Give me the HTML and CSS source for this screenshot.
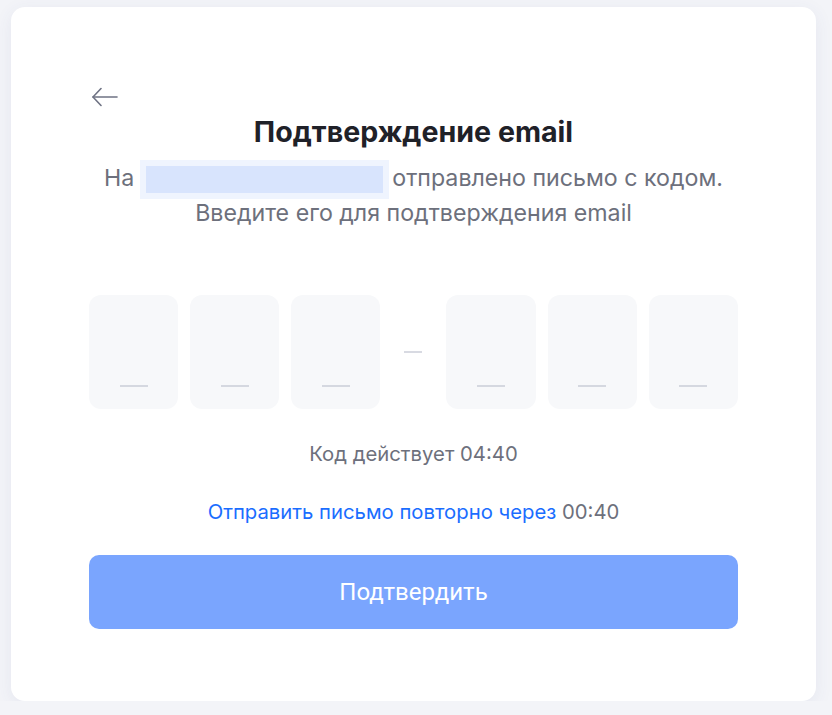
FILE: index.html
```html
<!DOCTYPE html>
<html lang="ru">
<head>
    <meta charset="UTF-8">
    <title>Подтверждение email</title>
    <link rel="stylesheet" href="styles.css">
</head>
<body>

<div class="card">
    <button class="back" aria-label="Назад">
        <svg width="26" height="24" viewBox="0 0 26 24" fill="none" stroke="#6f7384" stroke-width="1.6" stroke-linecap="round" stroke-linejoin="round">
            <path d="M25 12H1"/>
            <path d="M9 3.5L1 12l8 8.5"/>
        </svg>
    </button>

    <h1 class="title">Подтверждение email</h1>

    <p class="subtitle">
        На<span class="email-blur"></span>отправлено письмо с кодом.<br>
        Введите его для подтверждения email
    </p>

    <div class="code">
        <div class="cell"><span></span></div>
        <div class="cell"><span></span></div>
        <div class="cell"><span></span></div>
        <div class="dash"><span></span></div>
        <div class="cell"><span></span></div>
        <div class="cell"><span></span></div>
        <div class="cell"><span></span></div>
    </div>

    <p class="timer">Код действует 04:40</p>

    <p class="resend"><a href="#">Отправить письмо повторно через</a> 00:40</p>

    <button class="submit">Подтвердить</button>
</div>

</body>
</html>
```

FILE: styles.css
```css
body {
    margin: 0;
    background: #f3f4f8;
    font-family: Inter, "Noto Sans", sans-serif;
    color: #1f2128;
}

.card {
    box-sizing: border-box;
    width: 805px;
    height: 694px;
    margin: 7px 0 0 11px;
    padding: 0 78px;
    background: #ffffff;
    border-radius: 14px;
    box-shadow: 0 4px 18px rgba(60, 80, 140, 0.08);
    text-align: center;
    overflow: hidden;
}

.back {
    display: block;
    margin: 78px 0 0 3px;
    padding: 0;
    border: none;
    background: none;
    height: 24px;
    cursor: pointer;
}

.title {
    margin: 7px 0 0;
    font-size: 28.6px;
    line-height: 32px;
    font-weight: 700;
    color: #1f2128;
}

.subtitle {
    margin: 13px 0 0;
    font-size: 23.2px;
    line-height: 35px;
    color: #6d707c;
}

.email-blur {
    display: inline-block;
    width: 237px;
    height: 27px;
    margin: 0 9px 0 12px;
    vertical-align: -7px;
    background: #d8e4fd;
    box-shadow: 0 0 0 6px #eff4fe;
}

.code {
    display: grid;
    grid-template-columns: repeat(3, 1fr) 42px repeat(3, 1fr);
    column-gap: 12px;
    margin-top: 64px;
    height: 114px;
}

.cell {
    background: #f7f8fa;
    border-radius: 12px;
    display: flex;
    align-items: flex-end;
    justify-content: center;
    padding-bottom: 22px;
    box-sizing: border-box;
}

.cell span {
    width: 28px;
    height: 2px;
    background: #d5d8e0;
}

.dash {
    display: flex;
    align-items: center;
    justify-content: center;
}

.dash span {
    width: 18px;
    height: 2px;
    background: #d8dae2;
}

.timer {
    margin: 33px 0 0;
    font-size: 20.3px;
    line-height: 24px;
    color: #6d707c;
}

.resend {
    margin: 34px 0 0;
    font-size: 20.3px;
    line-height: 24px;
    color: #6d707c;
}

.resend a {
    color: #1a6dff;
    text-decoration: none;
}

.submit {
    display: block;
    width: 100%;
    height: 74px;
    margin-top: 31px;
    border: none;
    border-radius: 10px;
    background: #7aa5fe;
    color: #ffffff;
    font-family: Roboto, sans-serif;
    font-size: 24px;
    cursor: pointer;
}
```
